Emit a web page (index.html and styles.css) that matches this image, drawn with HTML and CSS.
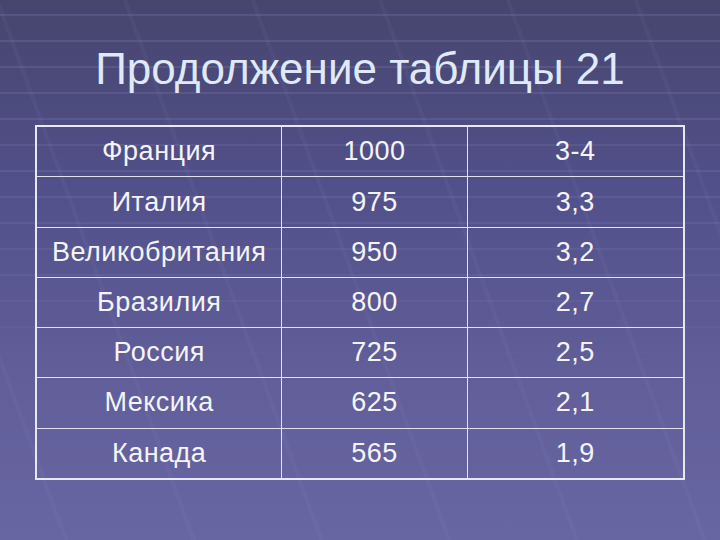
FILE: index.html
```html
<!DOCTYPE html>
<html lang="ru">
<head>
<meta charset="utf-8">
<link rel="stylesheet" href="styles.css">
</head>
<body>
<div class="slide">
  <div class="stripes"></div>
  <div class="diag"></div>
  <h1 class="title">Продолжение таблицы 21</h1>
  <table class="data">
    <colgroup><col class="c1"><col class="c2"><col class="c3"></colgroup>
    <tr><td>Франция</td><td>1000</td><td>3-4</td></tr>
    <tr><td>Италия</td><td>975</td><td>3,3</td></tr>
    <tr><td>Великобритания</td><td>950</td><td>3,2</td></tr>
    <tr><td>Бразилия</td><td>800</td><td>2,7</td></tr>
    <tr><td>Россия</td><td>725</td><td>2,5</td></tr>
    <tr><td>Мексика</td><td>625</td><td>2,1</td></tr>
    <tr><td>Канада</td><td>565</td><td>1,9</td></tr>
  </table>
</div>
</body>
</html>
```
FILE: styles.css
```css
html, body {
  margin: 0;
  padding: 0;
}
body {
  width: 720px;
  height: 540px;
  overflow: hidden;
}
.slide {
  position: relative;
  width: 720px;
  height: 540px;
  overflow: hidden;
  background: linear-gradient(to bottom, #46456e 0%, #52508a 35%, #615e9a 70%, #6866a2 100%);
  font-family: "Liberation Sans", Arial, sans-serif;
  display: flex;
  flex-direction: column;
  align-items: center;
}
.stripes {
  position: absolute;
  left: 0;
  top: 0;
  width: 720px;
  height: 540px;
  background:
    repeating-linear-gradient(to bottom, rgba(150,150,200,0) 0px, rgba(150,150,200,0) 14px, rgba(150,150,200,0.22) 14px, rgba(150,150,200,0.22) 16px, rgba(150,150,200,0) 16px, rgba(150,150,200,0) 26px);
  -webkit-mask-image: linear-gradient(to bottom, rgba(0,0,0,0.9) 0%, rgba(0,0,0,0.7) 40%, rgba(0,0,0,0.1) 70%, rgba(0,0,0,0) 85%);
  mask-image: linear-gradient(to bottom, rgba(0,0,0,0.9) 0%, rgba(0,0,0,0.7) 40%, rgba(0,0,0,0.1) 70%, rgba(0,0,0,0) 85%);
}
.diag {
  position: absolute;
  left: 0;
  top: 0;
  width: 720px;
  height: 540px;
  background: repeating-linear-gradient(70deg, rgba(160,160,210,0) 0px, rgba(160,160,210,0) 60px, rgba(160,160,210,0.06) 60px, rgba(160,160,210,0.06) 64px, rgba(160,160,210,0) 64px, rgba(160,160,210,0) 120px);
}
.title {
  position: relative;
  margin: 44px 0 0 0;
  font-weight: normal;
  font-size: 44px;
  line-height: 50px;
  color: #dfe9fa;
}
.data {
  position: relative;
  margin-top: 31px;
  width: 650px;
  height: 355px;
  border-collapse: collapse;
  border: 2px solid #e8e8f2;
  color: #f4f4f8;
  font-size: 27px;
  letter-spacing: 0.5px;
}
.c1 { width: 246px; }
.c2 { width: 186px; }
.c3 { width: 218px; }
.data td {
  border: 1px solid #e2e2ee;
  padding: 0;
  text-align: center;
  vertical-align: middle;
}
```
